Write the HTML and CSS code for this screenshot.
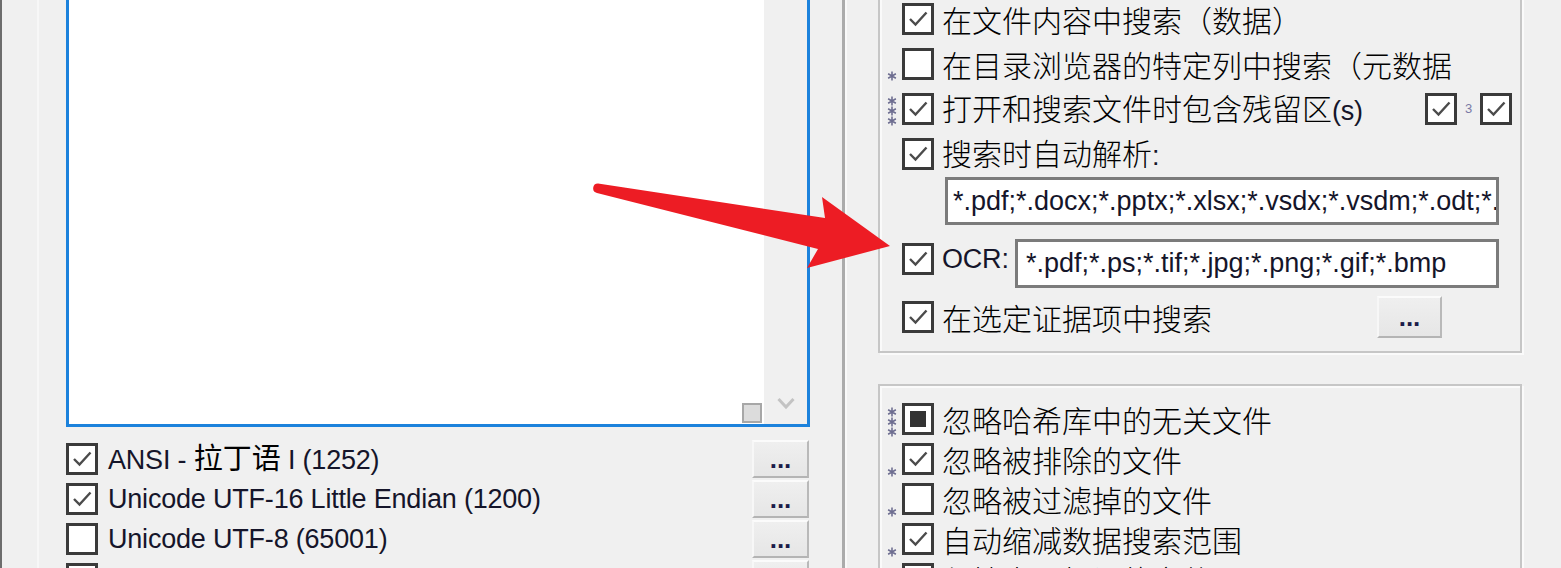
FILE: index.html
```html
<!DOCTYPE html>
<html lang="zh-CN">
<head>
<meta charset="utf-8">
<title>搜索选项</title>
<link rel="stylesheet" href="styles.css">
</head>
<body>
<div class="window">
  <div class="edge"></div>

  <div class="left">
    <div class="listbox">
      <div class="list-area"><span class="grip"></span></div>
      <div class="vscroll">
        <svg viewBox="0 0 18 13"><polyline points="1.5,2 9,10 16.5,2" fill="none" stroke="#c3c3c3" stroke-width="3"/></svg>
      </div>
    </div>

    <div class="enc-list">
      <div class="enc-row">
        <span class="cb"><svg viewBox="0 0 26 26"><polyline points="5,13 10.5,18.5 21.5,6.5" fill="none" stroke="#4b4b4b" stroke-width="2.4"/></svg></span>
        <span class="label en">ANSI - <span class="zh-in">拉丁语</span> I (1252)</span>
        <button class="btn">...</button>
      </div>
      <div class="enc-row">
        <span class="cb"><svg viewBox="0 0 26 26"><polyline points="5,13 10.5,18.5 21.5,6.5" fill="none" stroke="#4b4b4b" stroke-width="2.4"/></svg></span>
        <span class="label en">Unicode UTF-16 Little Endian (1200)</span>
        <button class="btn">...</button>
      </div>
      <div class="enc-row">
        <span class="cb"></span>
        <span class="label en">Unicode UTF-8 (65001)</span>
        <button class="btn">...</button>
      </div>
      <div class="enc-row">
        <span class="cb"><svg viewBox="0 0 26 26"><polyline points="5,13 10.5,18.5 21.5,6.5" fill="none" stroke="#4b4b4b" stroke-width="2.4"/></svg></span>
        <span class="label en">Unicode UTF-16 Big Endian (1201)</span>
        <button class="btn">...</button>
      </div>
    </div>
  </div>

  <div class="sep"></div>

  <div class="right">
    <div class="group group-top">
      <div class="opt">
        <span class="mark"></span>
        <span class="cb"><svg viewBox="0 0 26 26"><polyline points="5,13 10.5,18.5 21.5,6.5" fill="none" stroke="#4b4b4b" stroke-width="2.4"/></svg></span>
        <span class="label zh">在文件内容中搜索（数据）</span>
      </div>
      <div class="opt">
        <span class="mark"><svg viewBox="0 0 9 9"><path d="M4.5 0.5V8.5M1 2.5L8 6.5M8 2.5L1 6.5" stroke="#6d6d90" stroke-width="1.4"/></svg></span>
        <span class="cb"></span>
        <span class="label zh">在目录浏览器的特定列中搜索（元数据</span>
      </div>
      <div class="opt">
        <span class="mark">
          <svg viewBox="0 0 9 9"><path d="M4.5 0.5V8.5M1 2.5L8 6.5M8 2.5L1 6.5" stroke="#6d6d90" stroke-width="1.4"/></svg>
          <svg viewBox="0 0 9 9"><path d="M4.5 0.5V8.5M1 2.5L8 6.5M8 2.5L1 6.5" stroke="#6d6d90" stroke-width="1.4"/></svg>
          <svg viewBox="0 0 9 9"><path d="M4.5 0.5V8.5M1 2.5L8 6.5M8 2.5L1 6.5" stroke="#6d6d90" stroke-width="1.4"/></svg>
        </span>
        <span class="cb"><svg viewBox="0 0 26 26"><polyline points="5,13 10.5,18.5 21.5,6.5" fill="none" stroke="#4b4b4b" stroke-width="2.4"/></svg></span>
        <span class="label zh">打开和搜索文件时包含残留区<span class="en">(s)</span></span>
        <span class="extra">
          <span class="cb"><svg viewBox="0 0 26 26"><polyline points="5,13 10.5,18.5 21.5,6.5" fill="none" stroke="#4b4b4b" stroke-width="2.4"/></svg></span>
          <span class="three">3</span>
          <span class="cb"><svg viewBox="0 0 26 26"><polyline points="5,13 10.5,18.5 21.5,6.5" fill="none" stroke="#4b4b4b" stroke-width="2.4"/></svg></span>
        </span>
      </div>
      <div class="opt">
        <span class="mark"></span>
        <span class="cb"><svg viewBox="0 0 26 26"><polyline points="5,13 10.5,18.5 21.5,6.5" fill="none" stroke="#4b4b4b" stroke-width="2.4"/></svg></span>
        <span class="label zh">搜索时自动解析<span class="en">:</span></span>
      </div>
      <div class="field field-parse">*.pdf;*.docx;*.pptx;*.xlsx;*.vsdx;*.vsdm;*.odt;*.ods;*.odp;*.rtf</div>
      <div class="ocr-row">
        <span class="mark"></span>
        <span class="cbwrap">
          <span class="cb"><svg viewBox="0 0 26 26"><polyline points="5,13 10.5,18.5 21.5,6.5" fill="none" stroke="#4b4b4b" stroke-width="2.4"/></svg></span>
          <span class="label en">OCR:</span>
        </span>
        <div class="field field-ocr">*.pdf;*.ps;*.tif;*.jpg;*.png;*.gif;*.bmp</div>
      </div>
      <div class="opt opt-last">
        <span class="mark"></span>
        <span class="cb"><svg viewBox="0 0 26 26"><polyline points="5,13 10.5,18.5 21.5,6.5" fill="none" stroke="#4b4b4b" stroke-width="2.4"/></svg></span>
        <span class="label zh">在选定证据项中搜索</span>
        <button class="btn btn-group">...</button>
      </div>
    </div>

    <div class="group group-bottom">
      <div class="opt">
        <span class="mark">
          <svg viewBox="0 0 9 9"><path d="M4.5 0.5V8.5M1 2.5L8 6.5M8 2.5L1 6.5" stroke="#6d6d90" stroke-width="1.4"/></svg>
          <svg viewBox="0 0 9 9"><path d="M4.5 0.5V8.5M1 2.5L8 6.5M8 2.5L1 6.5" stroke="#6d6d90" stroke-width="1.4"/></svg>
          <svg viewBox="0 0 9 9"><path d="M4.5 0.5V8.5M1 2.5L8 6.5M8 2.5L1 6.5" stroke="#6d6d90" stroke-width="1.4"/></svg>
        </span>
        <span class="cb"><span class="fill"></span></span>
        <span class="label zh">忽略哈希库中的无关文件</span>
      </div>
      <div class="opt">
        <span class="mark"><svg viewBox="0 0 9 9"><path d="M4.5 0.5V8.5M1 2.5L8 6.5M8 2.5L1 6.5" stroke="#6d6d90" stroke-width="1.4"/></svg></span>
        <span class="cb"><svg viewBox="0 0 26 26"><polyline points="5,13 10.5,18.5 21.5,6.5" fill="none" stroke="#4b4b4b" stroke-width="2.4"/></svg></span>
        <span class="label zh">忽略被排除的文件</span>
      </div>
      <div class="opt">
        <span class="mark"><svg viewBox="0 0 9 9"><path d="M4.5 0.5V8.5M1 2.5L8 6.5M8 2.5L1 6.5" stroke="#6d6d90" stroke-width="1.4"/></svg></span>
        <span class="cb"></span>
        <span class="label zh">忽略被过滤掉的文件</span>
      </div>
      <div class="opt">
        <span class="mark"><svg viewBox="0 0 9 9"><path d="M4.5 0.5V8.5M1 2.5L8 6.5M8 2.5L1 6.5" stroke="#6d6d90" stroke-width="1.4"/></svg></span>
        <span class="cb"><svg viewBox="0 0 26 26"><polyline points="5,13 10.5,18.5 21.5,6.5" fill="none" stroke="#4b4b4b" stroke-width="2.4"/></svg></span>
        <span class="label zh">自动缩减数据搜索范围</span>
      </div>
      <div class="opt">
        <span class="mark"></span>
        <span class="cb"><span class="fill"></span></span>
        <span class="label zh">仅搜索已标记的文件</span>
      </div>
    </div>
  </div>
</div>

<svg class="arrow" viewBox="0 0 1561 568" aria-hidden="true">
  <path d="M598 183.5 L825 218 L822 197 L890 246 L807 268 L818 249 L597 193 A4.8 4.8 0 0 1 598 183.5 Z" fill="#ed1c24"/>
</svg>
</body>
</html>
```

FILE: styles.css
```css
* { box-sizing: border-box; }

html, body { margin: 0; padding: 0; }

body {
  width: 1561px;
  height: 568px;
  overflow: hidden;
  position: relative;
  background: #f0f0f0;
  color: #000;
  font-family: "Liberation Sans", "Noto Sans CJK SC", sans-serif;
}

.window {
  display: flex;
  height: 568px;
}

.edge {
  flex: none;
  width: 2px;
  background: #6d6d6d;
}

/* ---------- left column ---------- */
.left {
  flex: none;
  width: 840px;
  padding-left: 64px;
  background: linear-gradient(to right, transparent 35px, #f7f7f7 35px, #f7f7f7 37px, transparent 37px);
}

.listbox {
  display: flex;
  width: 744px;
  height: 427px;
  border: 3px solid #1c82dc;
  border-top: 0;
  background: #fff;
}

.list-area {
  flex: 1;
  display: flex;
  align-items: flex-end;
  justify-content: flex-end;
  padding: 0 2px 1px 0;
}

.grip {
  width: 20px;
  height: 20px;
  border: 2px solid #a7a7a7;
  background: #dcdcdc;
}

.vscroll {
  flex: none;
  width: 43px;
  background: #f0f0f0;
  display: flex;
  align-items: flex-end;
  justify-content: center;
  padding-bottom: 14px;
}

.vscroll svg { width: 18px; height: 13px; display: block; }

.enc-list {
  width: 743px;
  margin-top: 12px;
}

.enc-row {
  display: flex;
  align-items: center;
  height: 40px;
}

.enc-row .label { margin-left: 10px; }

/* ---------- checkboxes ---------- */
.cb {
  flex: none;
  width: 32px;
  height: 32px;
  border: 3px solid #3a3a3a;
  background: #fff;
  display: flex;
  align-items: center;
  justify-content: center;
}

.cb svg { width: 26px; height: 26px; display: block; }

.cb .fill {
  width: 16px;
  height: 16px;
  background: #333;
}

/* ---------- text ---------- */
.label { white-space: nowrap; }

.en {
  font-family: "Liberation Sans", "Noto Sans CJK SC", sans-serif;
  font-size: 27px;
  letter-spacing: -0.2px;
  color: #15152a;
  line-height: 32px;
}

.zh-in { font-size: 29px; color: #000; letter-spacing: 0; }

.zh {
  font-family: "Noto Sans CJK SC", "Liberation Sans", sans-serif;
  font-size: 30px;
  font-weight: 300;
  line-height: 32px;
  color: #000;
}

.zh .en { font-size: 27px; font-weight: 400; }

/* ---------- buttons ---------- */
.btn {
  flex: none;
  margin: 0 0 0 auto;
  padding: 0;
  width: 57px;
  height: 38px;
  border: 2px solid;
  border-color: #fbfbfb #b9b9b9 #b4b4b4 #f7f7f7;
  background: linear-gradient(#efefef, #e6e6e6);
  font-family: "Liberation Sans", sans-serif;
  font-weight: bold;
  font-size: 26px;
  line-height: 30px;
  color: #1c1c4a;
  display: flex;
  align-items: center;
  justify-content: center;
}

/* ---------- separator ---------- */
.sep {
  flex: none;
  width: 3px;
  background: #ababab;
  box-shadow: 2px 0 0 #f9f9f9;
}

/* ---------- right column ---------- */
.right {
  flex: 1;
  padding-left: 33px;
}

.group {
  width: 644px;
  border: 2px solid #c6c6c6;
  box-shadow: inset 2px 2px 0 #fafafa, 2px 2px 0 #fafafa;
}

.group-top {
  margin-top: -6px;
  padding-bottom: 11px;
}

.group-bottom {
  margin-top: 31px;
  padding-top: 13px;
}

.opt {
  display: flex;
  align-items: center;
  height: 45px;
}

.group-bottom .opt { height: 40px; }

.opt .label { margin-left: 8px; }

.mark {
  flex: none;
  width: 22px;
  height: 32px;
  padding-right: 5px;
  display: flex;
  flex-direction: column;
  justify-content: flex-end;
  align-items: flex-end;
  gap: 0;
  margin-bottom: -3px;
}

.mark svg { width: 10px; height: 10px; display: block; }

.extra {
  margin-left: auto;
  margin-right: 8px;
  display: flex;
  align-items: center;
}

.three {
  width: 23px;
  text-align: center;
  font-size: 13px;
  color: #7a7aa6;
}

.field {
  height: 48px;
  border: 3px solid #7b7b7b;
  background: #fff;
  padding-left: 5px;
  display: flex;
  align-items: center;
  overflow: hidden;
  white-space: nowrap;
  font-size: 27px;
  letter-spacing: 0;
  color: #15152a;
}

.field-parse {
  margin-left: 65px;
  margin-top: 1px;
  width: 554px;
}

.ocr-row {
  display: flex;
  align-items: flex-start;
  height: 49px;
  margin-top: 14px;
}

.cbwrap {
  display: flex;
  align-items: center;
  height: 32px;
  margin-top: 4px;
}

.cbwrap .label { margin-left: 8px; }

.ocr-row .mark { margin-top: 4px; }

.field-ocr {
  margin-left: auto;
  margin-right: 21px;
  width: 484px;
  height: 49px;
  padding-left: 8px;
}

.opt-last {
  height: 47px;
  margin-top: 5px;
}

.btn-group {
  width: 65px;
  height: 42px;
  margin-right: 78px;
}

/* ---------- annotation arrow ---------- */
.arrow {
  position: absolute;
  left: 0;
  top: 0;
  width: 1561px;
  height: 568px;
  pointer-events: none;
}
```
